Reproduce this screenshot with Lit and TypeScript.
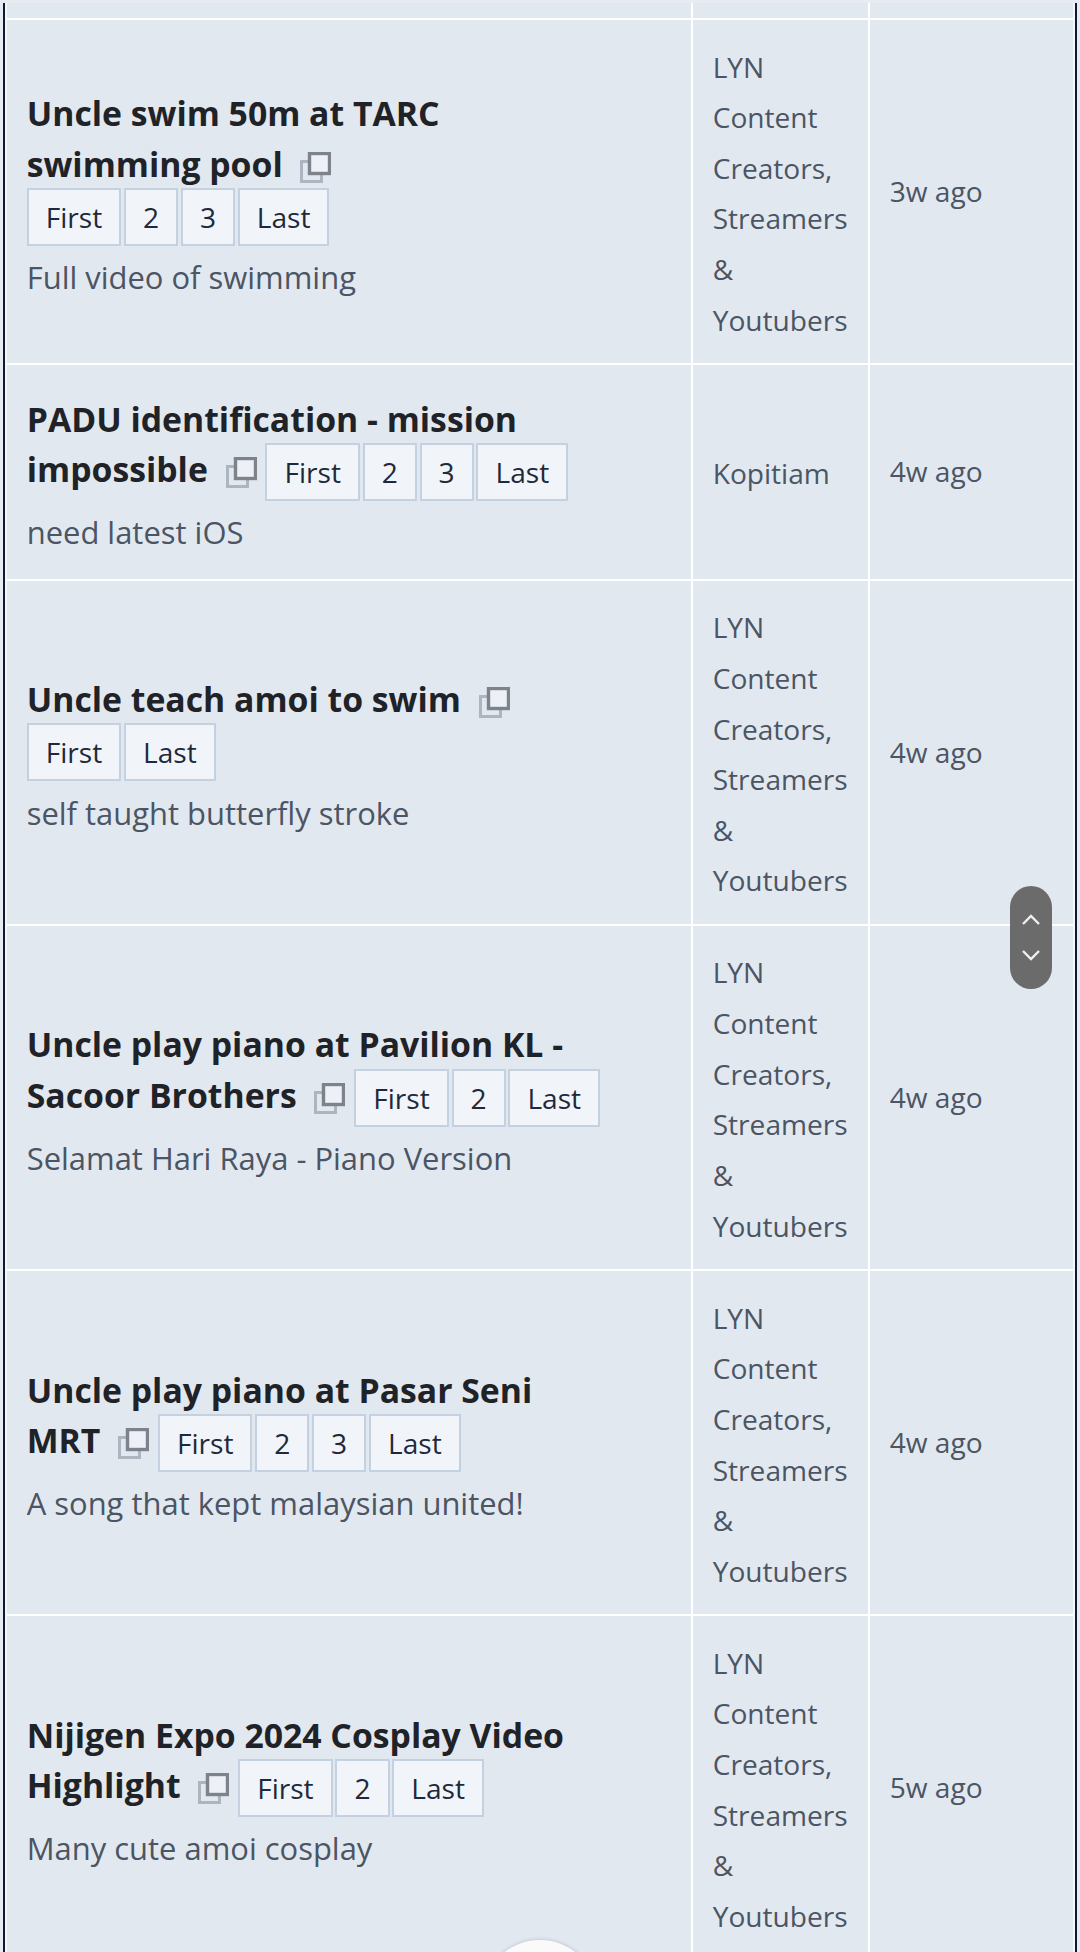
import { LitElement, html, css } from "lit";
import { customElement } from "lit/decorators.js";

interface Row { t: string; pages: string[]; d: string; f: string; a: string; }
const LYN = "LYN Content Creators, Streamers & Youtubers";
const rows: Row[] = [
  { t: "Uncle swim 50m at TARC swimming pool", pages: ["First", "2", "3", "Last"], d: "Full video of swimming", f: LYN, a: "3w ago" },
  { t: "PADU identification - mission impossible", pages: ["First", "2", "3", "Last"], d: "need latest iOS", f: "Kopitiam", a: "4w ago" },
  { t: "Uncle teach amoi to swim", pages: ["First", "Last"], d: "self taught butterfly stroke", f: LYN, a: "4w ago" },
  { t: "Uncle play piano at Pavilion KL - Sacoor Brothers", pages: ["First", "2", "Last"], d: "Selamat Hari Raya - Piano Version", f: LYN, a: "4w ago" },
  { t: "Uncle play piano at Pasar Seni MRT", pages: ["First", "2", "3", "Last"], d: "A song that kept malaysian united!", f: LYN, a: "4w ago" },
  { t: "Nijigen Expo 2024 Cosplay Video Highlight", pages: ["First", "2", "Last"], d: "Many cute amoi cosplay", f: LYN, a: "5w ago" },
];

@customElement("app-root")
export class AppRoot extends LitElement {
  static styles = css`
    :host { display: block; position: relative; height: 1952px; overflow: hidden; background: #e8ecf2;
      font-family: "Open Sans", "Noto Sans", sans-serif; font-size: 28.125px; line-height: 50.625px; color: #4b5563; }
    .frame { margin: 3px 3px 0 3px; border-left: 2px solid #0b1b36; border-right: 2px solid #0b1b36; height: 1949px; background: #f4f7fa; padding: 0 2px; overflow: hidden; }
    table { width: 100%; table-layout: fixed; border-collapse: collapse; }
    col.c2 { width: 177px; } col.c3 { width: 204px; }
    td { background: #e2e8f0; vertical-align: middle; border-left: 2px solid #fff; border-top: 2px solid #fff; }
    td:first-child { border-left: none; }
    td.main { padding: 19.69px; }
    td.forum { padding: 21.5px 19.69px 17.9px; }
    td.age { padding: 19.5px 19.69px 19.9px; }
    tr:first-child td { border-top: none; padding: 0; height: 15px; }
    .title { color: #1f2226; font-weight: 700; font-size: 33.75px; line-height: 50.625px; padding: 9px 65px 0 0; }
    .ic { display: inline-block; width: 31px; height: 31px; margin-left: 9px; vertical-align: -6px; }
    .ic rect.b { fill: none; stroke: #aeb4c0; stroke-width: 3; }
    .ic rect.f { fill: #edf1f7; stroke: #7e828b; stroke-width: 3.4; }
    .pages { display: inline-flex; gap: 2.8px; margin: -1.5px 0 1.5px; vertical-align: middle; font-weight: 400; }
    .pg { display: block; box-sizing: border-box; height: 58px; padding: 0 17px; border: 2px solid #c4d1e0; background: #f1f5f9; color: #1e293b; font-size: 28.125px; line-height: 54px; }
    .desc { margin: 3px 0 -2px; font-size: 30.94px; line-height: 55.7px; }
    .pill { position: absolute; left: 1010px; top: 886px; width: 42px; height: 103px; border-radius: 21px; background: #6b6b6b; }
    .pill svg { position: absolute; left: 11px; width: 20px; height: 12px; fill: none; stroke: #f0f0f0; stroke-width: 2.4; }
    .pill .up { top: 28px; } .pill .dn { top: 63px; }
    .fab { position: absolute; left: 482px; top: 1940px; width: 116px; height: 116px; border-radius: 50%; background: #fafafa; box-shadow: 0 0 4px rgba(0,0,0,.18); }
  `;
  icon() {
    return html`<svg class="ic" viewBox="0 0 31 31"><rect class="b" x="1.5" y="9.5" width="20" height="20"></rect><rect class="f" x="9.5" y="1.5" width="20" height="20"></rect></svg>`;
  }
  render() {
    return html`<div class="frame"><table>
      <colgroup><col /><col class="c2" /><col class="c3" /></colgroup>
      <tr><td></td><td></td><td></td></tr>
      ${rows.map((r) => html`<tr>
        <td class="main">
          <div class="title">${r.t} ${this.icon()} <span class="pages">${r.pages.map((p) => html`<span class="pg">${p}</span>`)}</span></div>
          <div class="desc">${r.d}</div>
        </td>
        <td class="forum">${r.f}</td>
        <td class="age">${r.a}</td>
      </tr>`)}
    </table></div>
    <div class="pill">
      <svg class="up" viewBox="0 0 20 12"><path d="M2 10 L10 2 L18 10"></path></svg>
      <svg class="dn" viewBox="0 0 20 12"><path d="M2 2 L10 10 L18 2"></path></svg>
    </div>
    <div class="fab"></div>`;
  }
}
